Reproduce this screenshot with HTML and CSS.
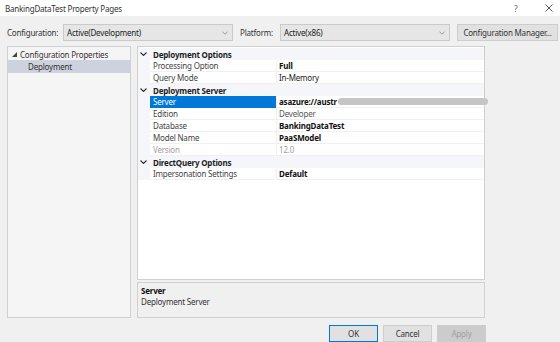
FILE: index.html
```html
<!DOCTYPE html>
<html>
<head>
<meta charset="utf-8">
<link rel="stylesheet" href="styles.css">
</head>
<body>
<div class="dialog">
  <div class="titlebar">
    <span class="title">BankingDataTest Property Pages</span>
    <span class="help">?</span>
    <span class="close">
      <svg width="8" height="8" viewBox="0 0 8 8"><path d="M0.5 0.5 L7.5 7.5 M7.5 0.5 L0.5 7.5" stroke="#444" stroke-width="0.9" fill="none"/></svg>
    </span>
  </div>
  <div class="configrow">
    <span class="lbl lbl-config">Configuration:</span>
    <div class="combo combo-config"><span>Active(Development)</span><svg class="chev" width="6" height="4" viewBox="0 0 6 4"><path d="M0.5 0.8 L3 3.2 L5.5 0.8" stroke="#999" fill="none"/></svg></div>
    <span class="lbl lbl-platform">Platform:</span>
    <div class="combo combo-platform"><span>Active(x86)</span><svg class="chev" width="6" height="4" viewBox="0 0 6 4"><path d="M0.5 0.8 L3 3.2 L5.5 0.8" stroke="#999" fill="none"/></svg></div>
    <div class="btn btn-cm">Configuration Manager...</div>
  </div>
  <div class="main">
    <div class="tree">
      <div class="tree-item root"><svg class="tri" width="5" height="5" viewBox="0 0 5 5"><path d="M5 0 L5 5 L0 5 Z" fill="#444"/></svg><span>Configuration Properties</span></div>
      <div class="tree-item child selected"><span>Deployment</span></div>
    </div>
    <div class="rightcol">
      <div class="grid">
        <div class="cat"><span class="cm"><svg width="7" height="4" viewBox="0 0 7 4"><path d="M0.5 0.5 L3.5 3.5 L6.5 0.5" stroke="#333" stroke-width="1.1" fill="none"/></svg></span><span class="ct">Deployment Options</span></div>
        <div class="prow"><span class="pm"></span><span class="pn">Processing Option</span><span class="pv b">Full</span></div>
        <div class="prow"><span class="pm"></span><span class="pn">Query Mode</span><span class="pv">In-Memory</span></div>
        <div class="cat"><span class="cm"><svg width="7" height="4" viewBox="0 0 7 4"><path d="M0.5 0.5 L3.5 3.5 L6.5 0.5" stroke="#333" stroke-width="1.1" fill="none"/></svg></span><span class="ct">Deployment Server</span></div>
        <div class="prow"><span class="pm"></span><span class="pn sel">Server</span><span class="pv b redact">asazure://austr<span class="blur"></span></span></div>
        <div class="prow"><span class="pm"></span><span class="pn">Edition</span><span class="pv g">Developer</span></div>
        <div class="prow"><span class="pm"></span><span class="pn">Database</span><span class="pv b">BankingDataTest</span></div>
        <div class="prow"><span class="pm"></span><span class="pn">Model Name</span><span class="pv b">PaaSModel</span></div>
        <div class="prow"><span class="pm"></span><span class="pn dis">Version</span><span class="pv dis">12.0</span></div>
        <div class="cat"><span class="cm"><svg width="7" height="4" viewBox="0 0 7 4"><path d="M0.5 0.5 L3.5 3.5 L6.5 0.5" stroke="#333" stroke-width="1.1" fill="none"/></svg></span><span class="ct">DirectQuery Options</span></div>
        <div class="prow"><span class="pm"></span><span class="pn">Impersonation Settings</span><span class="pv b">Default</span></div>
      </div>
      <div class="desc">
        <div class="desc-title">Server</div>
        <div class="desc-text">Deployment Server</div>
      </div>
    </div>
  </div>
  <div class="buttons">
    <div class="btn btn-ok">OK</div>
    <div class="btn">Cancel</div>
    <div class="btn btn-dis">Apply</div>
  </div>
</div>
</body>
</html>
```

FILE: styles.css
```css
html, body {
  margin: 0;
  padding: 0;
}
body {
  width: 560px;
  height: 342px;
  overflow: hidden;
  background: #f0f0f0;
  font-family: "Noto Sans", "Open Sans", sans-serif;
  font-size: 8px;
  letter-spacing: -0.2px;
  color: #222;
}
.dialog {
  display: flex;
  flex-direction: column;
  height: 342px;
}
.titlebar {
  height: 17px;
  background: #ffffff;
  display: flex;
  align-items: center;
  padding-left: 5px;
  padding-right: 7px;
  color: #333;
}
.title {
  flex: 1;
  white-space: nowrap;
}
.help {
  width: 8px;
  margin-right: 23px;
  color: #666;
  font-size: 8.5px;
}
.close {
  display: flex;
  align-items: center;
}
.configrow {
  margin-top: 8px;
  height: 17px;
  display: flex;
  align-items: center;
  padding-left: 7px;
  white-space: nowrap;
}
.lbl {
  color: #333;
}
.lbl-config {
  width: 56px;
}
.lbl-platform {
  width: 40px;
  margin-left: 7px;
}
.combo {
  height: 17px;
  box-sizing: border-box;
  border: 1px solid #cacaca;
  background: #e6e6e6;
  display: flex;
  align-items: center;
  justify-content: space-between;
  padding: 0 4px 0 3px;
  color: #222;
}
.combo-config {
  width: 170px;
}
.combo-platform {
  width: 170px;
}
.chev {
  display: block;
}
.btn {
  height: 17px;
  box-sizing: border-box;
  border: 1px solid #cdcdcd;
  background: #e1e1e1;
  display: flex;
  align-items: center;
  justify-content: center;
  color: #333;
  width: 49px;
  white-space: nowrap;
}
.btn-cm {
  width: 101px;
  margin-left: 7px;
}
.main {
  margin-top: 5px;
  display: flex;
  padding-left: 7px;
  gap: 6px;
}
.tree {
  width: 124px;
  height: 272px;
  box-sizing: border-box;
  border: 1px solid #d0d0d0;
  background: #f5f5f5;
  padding-top: 1px;
}
.tree-item {
  height: 12px;
  display: flex;
  align-items: center;
  color: #333;
  white-space: nowrap;
}
.tree-item.root {
  padding-left: 4px;
}
.tree-item .tri {
  margin-right: 3px;
}
.tree-item.child {
  padding-left: 20px;
  height: 13px;
}
.tree-item.selected {
  background: #cdd2de;
}
.rightcol {
  width: 348px;
  display: flex;
  flex-direction: column;
  gap: 2px;
}
.grid {
  height: 234px;
  box-sizing: border-box;
  border: 1px solid #d0d0d0;
  background: #ffffff;
  padding-top: 1px;
}
.cat, .prow {
  height: 12px;
  display: flex;
  align-items: stretch;
  white-space: nowrap;
}
.cat {
  background: #f4f6f9;
  font-weight: bold;
  color: #1e1e1e;
}
.cm {
  width: 15px;
  display: flex;
  align-items: center;
  justify-content: flex-end;
  box-sizing: border-box;
}
.cm svg {
  margin-right: 6px;
}
.ct {
  display: flex;
  align-items: center;
}
.pm {
  width: 12px;
  background: #f4f6f9;
}
.pn {
  width: 126px;
  box-sizing: border-box;
  padding-left: 3px;
  display: flex;
  align-items: center;
  color: #444;
  border-bottom: 1px solid #f0f0f0;
}
.pn.sel {
  background: #0078d7;
  color: #ffffff;
  border-bottom-color: #0078d7;
}
.pv {
  flex: 1;
  box-sizing: border-box;
  padding-left: 2px;
  display: flex;
  align-items: center;
  color: #222;
  border-bottom: 1px solid #f0f0f0;
  border-left: 1px solid #f0f0f0;
}
.pv.b {
  font-weight: bold;
  color: #111;
}
.pv.g {
  color: #555;
}
.dis {
  color: #a0a0a0 !important;
}
.redact {
  position: relative;
}
.blur {
  position: absolute;
  left: 61px;
  top: 2px;
  width: 150px;
  height: 7px;
  border-radius: 4px;
  background: #c6c6c6;
  filter: blur(0.6px);
}
.desc {
  height: 36px;
  box-sizing: border-box;
  border: 1px solid #d0d0d0;
  background: #f0f0f0;
  padding: 2px 0 0 3px;
}
.desc-title {
  font-weight: bold;
  color: #111;
  line-height: 11px;
}
.desc-text {
  color: #333;
  line-height: 12px;
}
.buttons {
  margin-top: 7px;
  display: flex;
  justify-content: flex-end;
  gap: 5px;
  padding-right: 74px;
}
.btn-ok {
  border: 1px solid #0078d7;
  background: #e1e1e1;
}
.btn-dis {
  background: #cccccc;
  border-color: #cccccc;
  color: #a0a0a0;
}
```
